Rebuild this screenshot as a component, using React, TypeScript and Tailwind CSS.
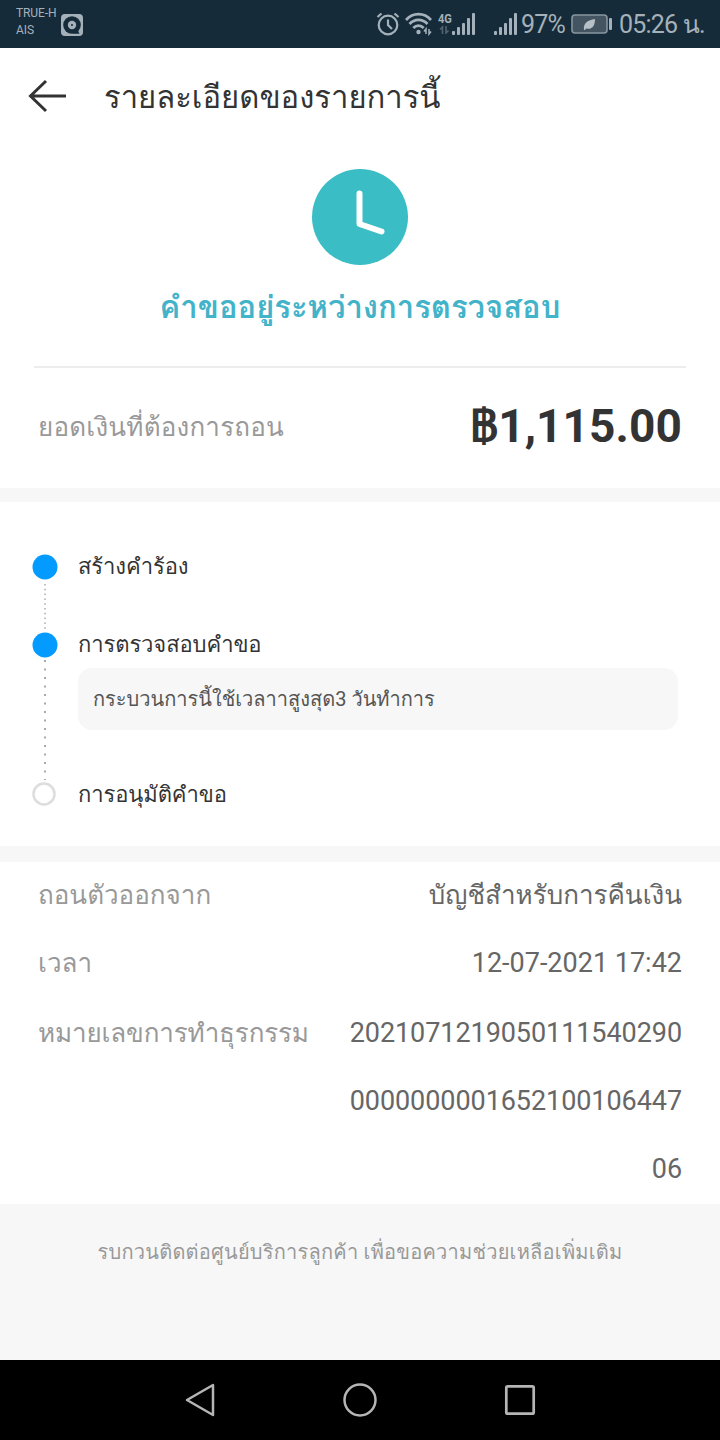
import type { ReactNode } from "react";

type Step = {
  label: string;
  note?: string;
};

const steps: Step[] = [
  { label: "สร้างคำร้อง" },
  { label: "การตรวจสอบคำขอ", note: "กระบวนการนี้ใช้เวลาาสูงสุด3 วันทำการ" },
  { label: "การอนุมัติคำขอ" },
];

function SignalIcon() {
  return (
    <svg width="24" height="24" viewBox="0 0 24 24" fill="#a5b1ba">
      <rect x="0" y="18" width="3" height="4" rx="1" />
      <rect x="5" y="14" width="3" height="8" rx="1" />
      <rect x="10" y="10" width="3" height="12" rx="1" />
      <rect x="15" y="5" width="3" height="17" rx="1" />
      <rect x="20" y="0" width="3" height="22" rx="1" />
    </svg>
  );
}

function StatusBar() {
  return (
    <div className="flex h-12 items-start bg-[#152b39] text-[#a5b1ba]">
      <div className="mt-[5px] ml-4 w-[45px] text-[12px] leading-[17px] tracking-[-0.1px] whitespace-nowrap">
        <p>TRUE-H</p>
        <p>AIS</p>
      </div>
      <svg className="mt-[14px]" width="22" height="22" viewBox="0 0 22 22">
        <rect width="22" height="22" rx="4" fill="#a5b1ba" />
        <circle cx="11" cy="11" r="8.8" fill="#152b39" />
        <path d="M12 19.8h6.500l-2-4z" fill="#152b39" />
        <circle cx="11" cy="11" r="4.2" fill="#a5b1ba" />
        <circle cx="11" cy="11" r="1" fill="#152b39" />
      </svg>
      <svg className="mt-3 ml-[293px]" width="24" height="24" viewBox="0 0 24 24" fill="none" stroke="#a5b1ba" strokeWidth="2.2">
        <circle cx="12" cy="13" r="9.3" />
        <path d="M12 7.5V13l4 4M1.5 5l4-3.5M22.5 5l-4-3.5" />
      </svg>
      <svg className="mt-3 ml-[5px]" width="27" height="24" viewBox="0 0 27 24" fill="none" stroke="#a5b1ba" strokeWidth="2.7">
        <path d="M1 8C8 .2 19 .2 26 8M4.5 12c5-5.5 13-5.5 18 0M8.3 16c3-3.3 7.4-3.3 10.4 0" />
        <circle cx="13.5" cy="20" r="2.2" fill="#a5b1ba" stroke="none" />
        <path d="M21 22v-5l-2 2.5M24 17v5l2-2.5" strokeWidth="1.5" />
      </svg>
      <div className="mt-3 ml-[6px] w-[13px]">
        <p className="origin-left scale-x-85 text-[13px] leading-[13px] font-bold">4G</p>
        <svg width="12" height="9" viewBox="0 0 12 9" fill="none" stroke="#52636f" strokeWidth="1.6">
          <path d="M4.5 9V2L2 4.5M8 1v7l2.5-2.5" />
        </svg>
      </div>
      <div className="mt-[13px] ml-px">
        <SignalIcon />
      </div>
      <div className="mt-[13px] ml-[18px]">
        <SignalIcon />
      </div>
      <p className="ml-[3px] w-[50px] text-[25px] leading-[50px] tracking-[-0.8px] whitespace-nowrap">97%</p>
      <svg className="mt-[14px]" width="42" height="20" viewBox="0 0 42 20">
        <rect x="1" y="1" width="35" height="18" rx="3" fill="#445561" stroke="#8796a0" strokeWidth="1.6" />
        <path d="M13 16c-1-7 4-10 11-11 0 7-3 11-9 9.5L14 16z" fill="#b7c0c6" />
        <rect x="38" y="4" width="3" height="12" rx="1" fill="#a5b1ba" />
      </svg>
      <p className="ml-[6px] text-[25px] leading-[50px] tracking-[-0.8px] whitespace-nowrap">05:26 น.</p>
    </div>
  );
}

function DetailRow({ label, children }: { label: string; children: ReactNode }) {
  return (
    <div className="flex justify-between text-[26px] leading-[68px]">
      <span className="whitespace-nowrap text-[#999]">{label}</span>
      <div className="text-right text-[#666]">{children}</div>
    </div>
  );
}

function Timeline() {
  return (
    <div className="flex h-[344px] bg-white pt-[52px]">
      <svg className="ml-8 shrink-0" width="26" height="260" viewBox="0 0 26 260">
        <path d="M13 30V78" stroke="#aaa" strokeWidth="1.5" strokeDasharray="1.5 3.3" />
        <path d="M13 106V226" stroke="#aaa" strokeWidth="2" strokeDasharray="2 6.5" />
        <circle cx="13" cy="13" r="12.5" fill="#039bff" />
        <circle cx="13" cy="91" r="12.5" fill="#039bff" />
        <circle cx="12" cy="240" r="10.5" fill="#fff" stroke="#ddd" strokeWidth="2.5" />
      </svg>
      <div className="ml-5 w-[600px]">
        {steps.map((step) => (
          <div key={step.label} className={step.note ? "h-[150px]" : "h-[78px]"}>
            <p className="text-[22px] leading-[26px] tracking-[-0.1px] whitespace-nowrap text-[#333]">{step.label}</p>
            {step.note && (
              <div className="mt-[10px] h-[62px] rounded-[14px] bg-[#f7f7f7] px-[15px] text-[20px] leading-[62px] whitespace-nowrap text-[#555]">
                {step.note}
              </div>
            )}
          </div>
        ))}
      </div>
    </div>
  );
}

function NavBar() {
  return (
    <div className="flex h-20 items-center justify-center gap-[124px] bg-black">
      <svg width="36" height="36" viewBox="0 0 36 36" fill="none" stroke="#b5b5b5" strokeWidth="2.5" strokeLinejoin="round">
        <path d="M31 3v30L5 18z" />
      </svg>
      <svg width="36" height="36" viewBox="0 0 36 36" fill="none" stroke="#b5b5b5" strokeWidth="2.5">
        <circle cx="18" cy="18" r="15.5" />
      </svg>
      <svg width="36" height="36" viewBox="0 0 36 36" fill="none" stroke="#b5b5b5" strokeWidth="2.7">
        <rect x="4.3" y="4.3" width="27.4" height="27.4" rx="1.5" />
      </svg>
    </div>
  );
}

export default function App() {
  return (
    <div className="flex h-[1440px] w-[720px] flex-col overflow-hidden bg-[#f7f7f7] font-[Roboto,Loma,serif]">
      <StatusBar />

      <header className="flex h-24 items-center bg-white">
        <svg className="ml-7" width="38" height="34" viewBox="0 0 38 34" fill="none" stroke="#333" strokeWidth="3">
          <path d="M38 17H2.5M18 2L2.5 17 18 32" />
        </svg>
        <h1 className="mt-1 ml-[38px] text-[31px] leading-[92px] whitespace-nowrap text-[#333]">รายละเอียดของรายการนี้</h1>
      </header>

      <section className="flex h-[344px] flex-col items-center bg-white pt-[25px]">
        <svg width="96" height="96" viewBox="0 0 96 96">
          <circle cx="48" cy="48" r="48" fill="#3bbdc5" />
          <path d="M47.5 24.5V55L69.5 62.5" fill="none" stroke="#fff" strokeWidth="6" strokeLinecap="round" strokeLinejoin="round" />
        </svg>
        <p className="mt-[22px] h-[79px] text-[31px] leading-[42px] font-bold whitespace-nowrap text-[#43b3c9]">คำขออยู่ระหว่างการตรวจสอบ</p>
        <div className="h-0.5 w-[652px] shrink-0 bg-[#ededed]" />
        <div className="flex h-[116px] w-full items-center justify-between px-[38px]">
          <span className="mt-0.5 text-[26px] tracking-[0.2px] whitespace-nowrap text-[#999]">ยอดเงินที่ต้องการถอน</span>
          <span className="text-[46px] font-bold tracking-[0.1px] whitespace-nowrap text-[#333]">฿1,115.00</span>
        </div>
      </section>

      <div className="h-[14px]" />
      <Timeline />
      <div className="h-4" />

      <section className="flex h-[342px] flex-col bg-white px-[38px]">
        <div className="-mt-px mb-[2px]">
          <DetailRow label="ถอนตัวออกจาก">บัญชีสำหรับการคืนเงิน</DetailRow>
          <DetailRow label="เวลา">
            <span className="text-[27px]">12-07-2021 17:42</span>
          </DetailRow>
        </div>
        <div className="tracking-[-0.15px]">
          <DetailRow label="หมายเลขการทำธุรกรรม">
            <div className="text-[27px] tracking-[-0.07px]">
              <p>2021071219050111540290</p>
              <p>0000000001652100106447</p>
              <p>06</p>
            </div>
          </DetailRow>
        </div>
      </section>

      <footer className="h-[156px] pt-[30px] text-center text-[20px] leading-[37px] tracking-[0.23px] whitespace-nowrap text-[#999]">
        รบกวนติดต่อศูนย์บริการลูกค้า เพื่อขอความช่วยเหลือเพิ่มเติม
      </footer>

      <NavBar />
    </div>
  );
}
